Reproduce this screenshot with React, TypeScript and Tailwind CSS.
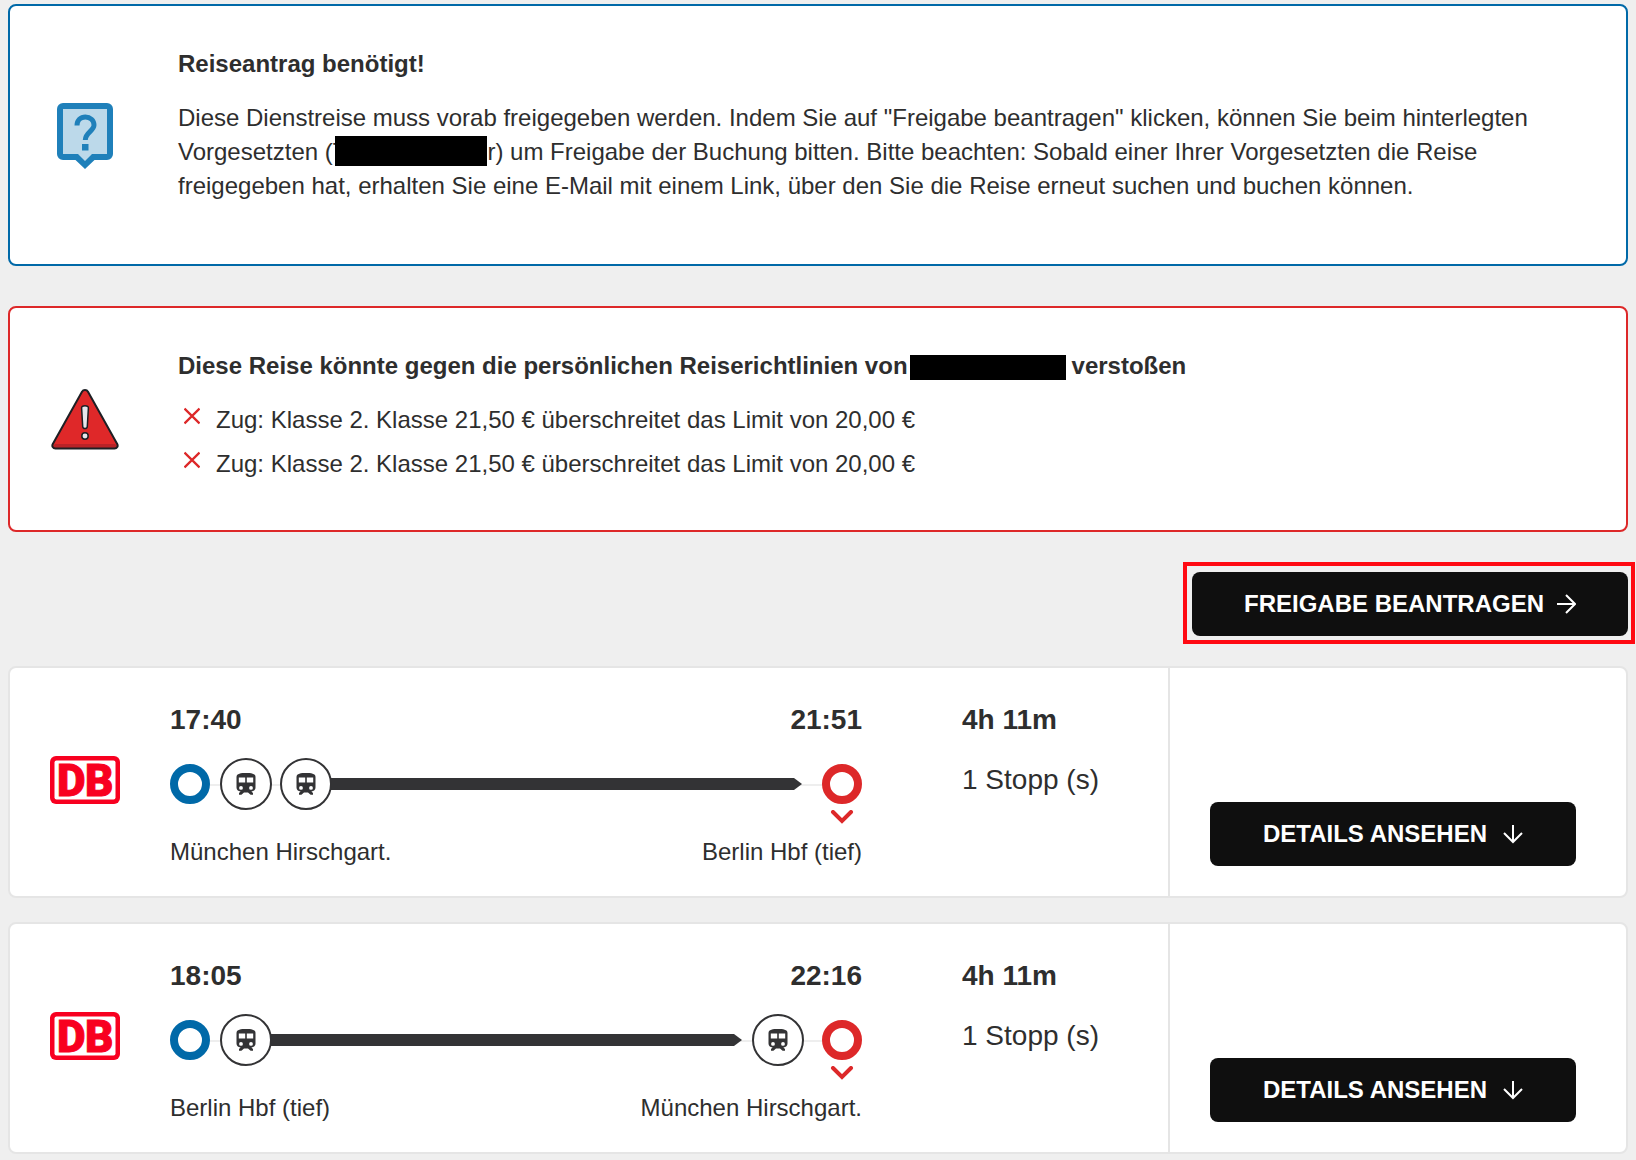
import React from 'react';

const RingIcon: React.FC<{ color: string }> = ({ color }) => (
  <span className={`block size-10 shrink-0 rounded-full border-8 bg-white ${color}`} />
);

const QuestionIcon: React.FC = () => (
  <svg width="56" height="68" viewBox="0 0 56 68" fill="none" aria-hidden="true">
    <path d="M3 4.5H53V55H35L28 62L21 55H3Z" fill="#bcd9ea" />
    <path
      fillRule="evenodd"
      d="M6 2H50A6 6 0 0 1 56 8V53A6 6 0 0 1 50 59H37.5L28 68L18.5 59H6A6 6 0 0 1 0 53V8A6 6 0 0 1 6 2ZM6 8V53H21L28 60L35 53H50V8Z"
      fill="#1f80ba"
    />
    <path d="M20 24.5C20 19.5 23.6 16 28.4 16C33.2 16 37 19.4 37 24C37 30 28.3 31.5 28.3 39" stroke="#1f80ba" strokeWidth="5" />
    <path d="M25 43H31.5V49.5H25Z" fill="#1f80ba" />
  </svg>
);

const WarningIcon: React.FC = () => (
  <svg width="68" height="62" viewBox="0 0 68 62" fill="none" aria-hidden="true">
    <path d="M34 2C35.3 2 36.4 2.7 37 3.8L66.2 56C67.4 58.2 66 60.5 63.6 60.5H4.4C2 60.5 .6 58.2 1.8 56L31 3.8C31.6 2.7 32.7 2 34 2Z" fill="#df2829" />
    <path d="M4 56H64L66 58L63.6 60.5H4.4L2 58Z" fill="#b82227" />
    <path d="M34 2C35.3 2 36.4 2.7 37 3.8L66.2 56C67.4 58.2 66 60.5 63.6 60.5H4.4C2 60.5 .6 58.2 1.8 56L31 3.8C31.6 2.7 32.7 2 34 2Z" stroke="#1d1f24" strokeWidth="2" />
    <path d="M30.6 20C30.5 18.6 31.6 17.8 34 17.8S37.5 18.6 37.4 20L36.3 38.5C36.2 40 35.5 40.6 34 40.6S31.8 40 31.7 38.5Z" fill="#e6e6ec" stroke="#1d1f24" strokeWidth="1.5" />
    <circle cx="34" cy="48" r="3.2" fill="#e6e6ec" stroke="#1d1f24" strokeWidth="1.5" />
  </svg>
);

const DbLogo: React.FC = () => (
  <svg className="overflow-visible" width="70" height="48" viewBox="0 0 70 48" role="img" aria-label="DB">
    <rect width="70" height="48" rx="6" fill="#f80020" />
    <rect x="4.5" y="4.5" width="61" height="39" rx="2" fill="#fff" />
    <g fill="#f80020" stroke="#f80020" strokeWidth="1" fontFamily="Roboto, sans-serif" fontWeight="900" fontSize="44">
      <text x="7" y="39.5">D</text>
      <text x="35" y="39.5">B</text>
    </g>
  </svg>
);

const TrainStop: React.FC = () => (
  <span className="z-10 mr-2 flex size-13 shrink-0 items-center justify-center rounded-full border-2 border-[#333335] bg-white">
    <svg width="20" height="24" viewBox="0 0 20 24" aria-hidden="true">
      <path
        fillRule="evenodd"
        fill="#333335"
        d="M10 1C5 1 .5 1.4 .5 5V15.5C.5 17.8 2 19.2 4.6 19.4L3 21V22.8H5.4L8 20.6H12L14.6 22.8H17V21L15.4 19.4C18 19.2 19.5 17.8 19.5 15.5V5C19.5 1.4 15 1 10 1ZM2.8 5.5H9.2V10.5H2.8ZM10.8 5.5H17.2V10.5H10.8ZM5 14A1.9 1.9 0 1 1 5 17.8A1.9 1.9 0 1 1 5 14ZM15 14A1.9 1.9 0 1 1 15 17.8A1.9 1.9 0 1 1 15 14Z"
      />
    </svg>
  </span>
);

const Notice: React.FC<{
  border: string;
  padding: string;
  icon: React.ReactNode;
  children: React.ReactNode;
}> = ({ border, padding, icon, children }) => (
  <section className={`flex items-center rounded-lg border-2 bg-white ${border}`}>
    <div className="flex w-[150px] shrink-0 justify-center">{icon}</div>
    <div className={`flex-1 pr-14 pl-[18px] text-2xl leading-[34px] ${padding}`}>{children}</div>
  </section>
);

const ActionButton: React.FC<{ label: string; arrow: string; className: string }> = ({ label, arrow, className }) => (
  <button type="button" className={`flex h-16 items-center justify-center rounded-lg bg-[#0f0f0f] text-2xl font-bold text-white ${className}`}>
    {label}
    <svg width="20" height="20" viewBox="0 0 20 20" fill="none" stroke="currentColor" strokeWidth="2" aria-hidden="true">
      <path d={arrow} />
    </svg>
  </button>
);

type Trip = {
  depart: string;
  arrive: string;
  from: string;
  to: string;
  leading: number;
  trailing: number;
};

const trips: Trip[] = [
  { depart: '17:40', arrive: '21:51', from: 'München Hirschgart.', to: 'Berlin Hbf (tief)', leading: 2, trailing: 0 },
  { depart: '18:05', arrive: '22:16', from: 'Berlin Hbf (tief)', to: 'München Hirschgart.', leading: 1, trailing: 1 },
];

const stops = (count: number) => Array.from({ length: count }, (_, idx) => <TrainStop key={idx} />);

const TripCard: React.FC<{ trip: Trip }> = ({ trip }) => (
  <article className="flex rounded-lg border-2 border-[#e5e5e5] bg-white">
    <div className="flex flex-1 pt-8 pb-[26px] pl-10">
      <div className="mr-[50px] flex w-[70px] shrink-0 items-center pb-2.5">
        <DbLogo />
      </div>
      <div className="flex-1">
        <div className="flex justify-between text-[28px] leading-10 font-bold">
          <span>{trip.depart}</span>
          <span>{trip.arrive}</span>
        </div>
        <div className="relative mt-[18px] flex items-center">
          <span className="absolute inset-x-5 top-[26px] h-0.5 bg-[#eeeeee]" />
          <span className="z-10 mr-2.5">
            <RingIcon color="border-[#0069a8]" />
          </span>
          {stops(trip.leading)}
          <span className="z-0 mr-2.5 -ml-2.5 flex h-3 flex-1">
            <span className="h-3 flex-1 bg-[#333335]" />
            <svg width="8" height="12" viewBox="0 0 8 12" fill="#333335" aria-hidden="true">
              <path d="M0 0L8 6L0 12Z" />
            </svg>
          </span>
          {stops(trip.trailing)}
          <span className="relative z-10 ml-2.5">
            <RingIcon color="border-[#dd2829]" />
            <svg className="absolute top-[46px] left-2" width="24" height="14" viewBox="0 0 24 14" fill="none" aria-hidden="true">
              <path d="M3 2L12 11L21 2" stroke="#dd2829" strokeWidth="4" strokeLinecap="round" />
            </svg>
          </span>
        </div>
        <div className="mt-6 flex justify-between text-2xl leading-9">
          <span>{trip.from}</span>
          <span>{trip.to}</span>
        </div>
      </div>
      <div className="ml-[100px] w-[206px] shrink-0 text-[28px] leading-10">
        <p className="font-bold">4h 11m</p>
        <p className="mt-5">1 Stopp (s)</p>
      </div>
    </div>
    <div className="flex w-[458px] shrink-0 items-end border-l-2 border-[#e5e5e5] pr-[50px] pb-[30px] pl-10">
      <ActionButton label="DETAILS ANSEHEN" arrow="M10 1V18M1 9L10 18L19 9" className="flex-1 gap-4" />
    </div>
  </article>
);

export default function App() {
  return (
    <main className="min-h-screen bg-[#efefef] px-2 pt-1 pb-1.5 font-['Liberation_Sans',Arial,sans-serif] text-[#2e2e2e]">
      <Notice border="border-[#0069a8]" padding="pt-[41px] pb-[61px]" icon={<QuestionIcon />}>
        <h2 className="mb-5 font-bold">Reiseantrag benötigt!</h2>
        <p>
          Diese Dienstreise muss vorab freigegeben werden. Indem Sie auf "Freigabe beantragen" klicken, können Sie beim
          hinterlegten Vorgesetzten (T
          <span className="relative -my-1 -ml-3 inline-block h-[30px] w-[152px] bg-black align-[-2px]" />
          r) um Freigabe der Buchung bitten. Bitte beachten: Sobald einer Ihrer Vorgesetzten die Reise freigegeben hat,
          erhalten Sie eine E-Mail mit einem Link, über den Sie die Reise erneut suchen und buchen können.
        </p>
      </Notice>

      <div className="mt-10">
        <Notice border="border-[#dd2829]" padding="pt-[41px] pb-[49px]" icon={<WarningIcon />}>
          <h2 className="mb-5 font-bold">
            Diese Reise könnte gegen die persönlichen Reiserichtlinien von
            <span className="mr-1.5 ml-0.5 inline-block h-[25px] w-[156px] bg-black align-middle" />
            verstoßen
          </h2>
          <ul className="space-y-2.5">
            {[1, 2].map((id) => (
              <li key={id} className="flex">
                <svg className="mt-1 mr-4 ml-1.5 shrink-0" width="16" height="18" viewBox="0 0 16 18" fill="none" aria-hidden="true">
                  <path d="M.5 1.5L15.5 16.5M15.5 1.5L.5 16.5" stroke="#dd2829" strokeWidth="2.3" />
                </svg>
                Zug: Klasse 2. Klasse 21,50 € überschreitet das Limit von 20,00 €
              </li>
            ))}
          </ul>
        </Notice>
      </div>

      <div className="mt-10 flex justify-end">
        <div className="relative">
          <ActionButton label="FREIGABE BEANTRAGEN" arrow="M1 10H19M10 1L19 10L10 19" className="w-[436px] gap-3" />
          <span className="pointer-events-none absolute -top-2.5 -right-[7px] -bottom-2 -left-[9px] border-4 border-[#ff0a12]" />
        </div>
      </div>

      <div className="mt-[30px] space-y-6">
        {trips.map((trip) => (
          <TripCard key={trip.depart} trip={trip} />
        ))}
      </div>
    </main>
  );
}
